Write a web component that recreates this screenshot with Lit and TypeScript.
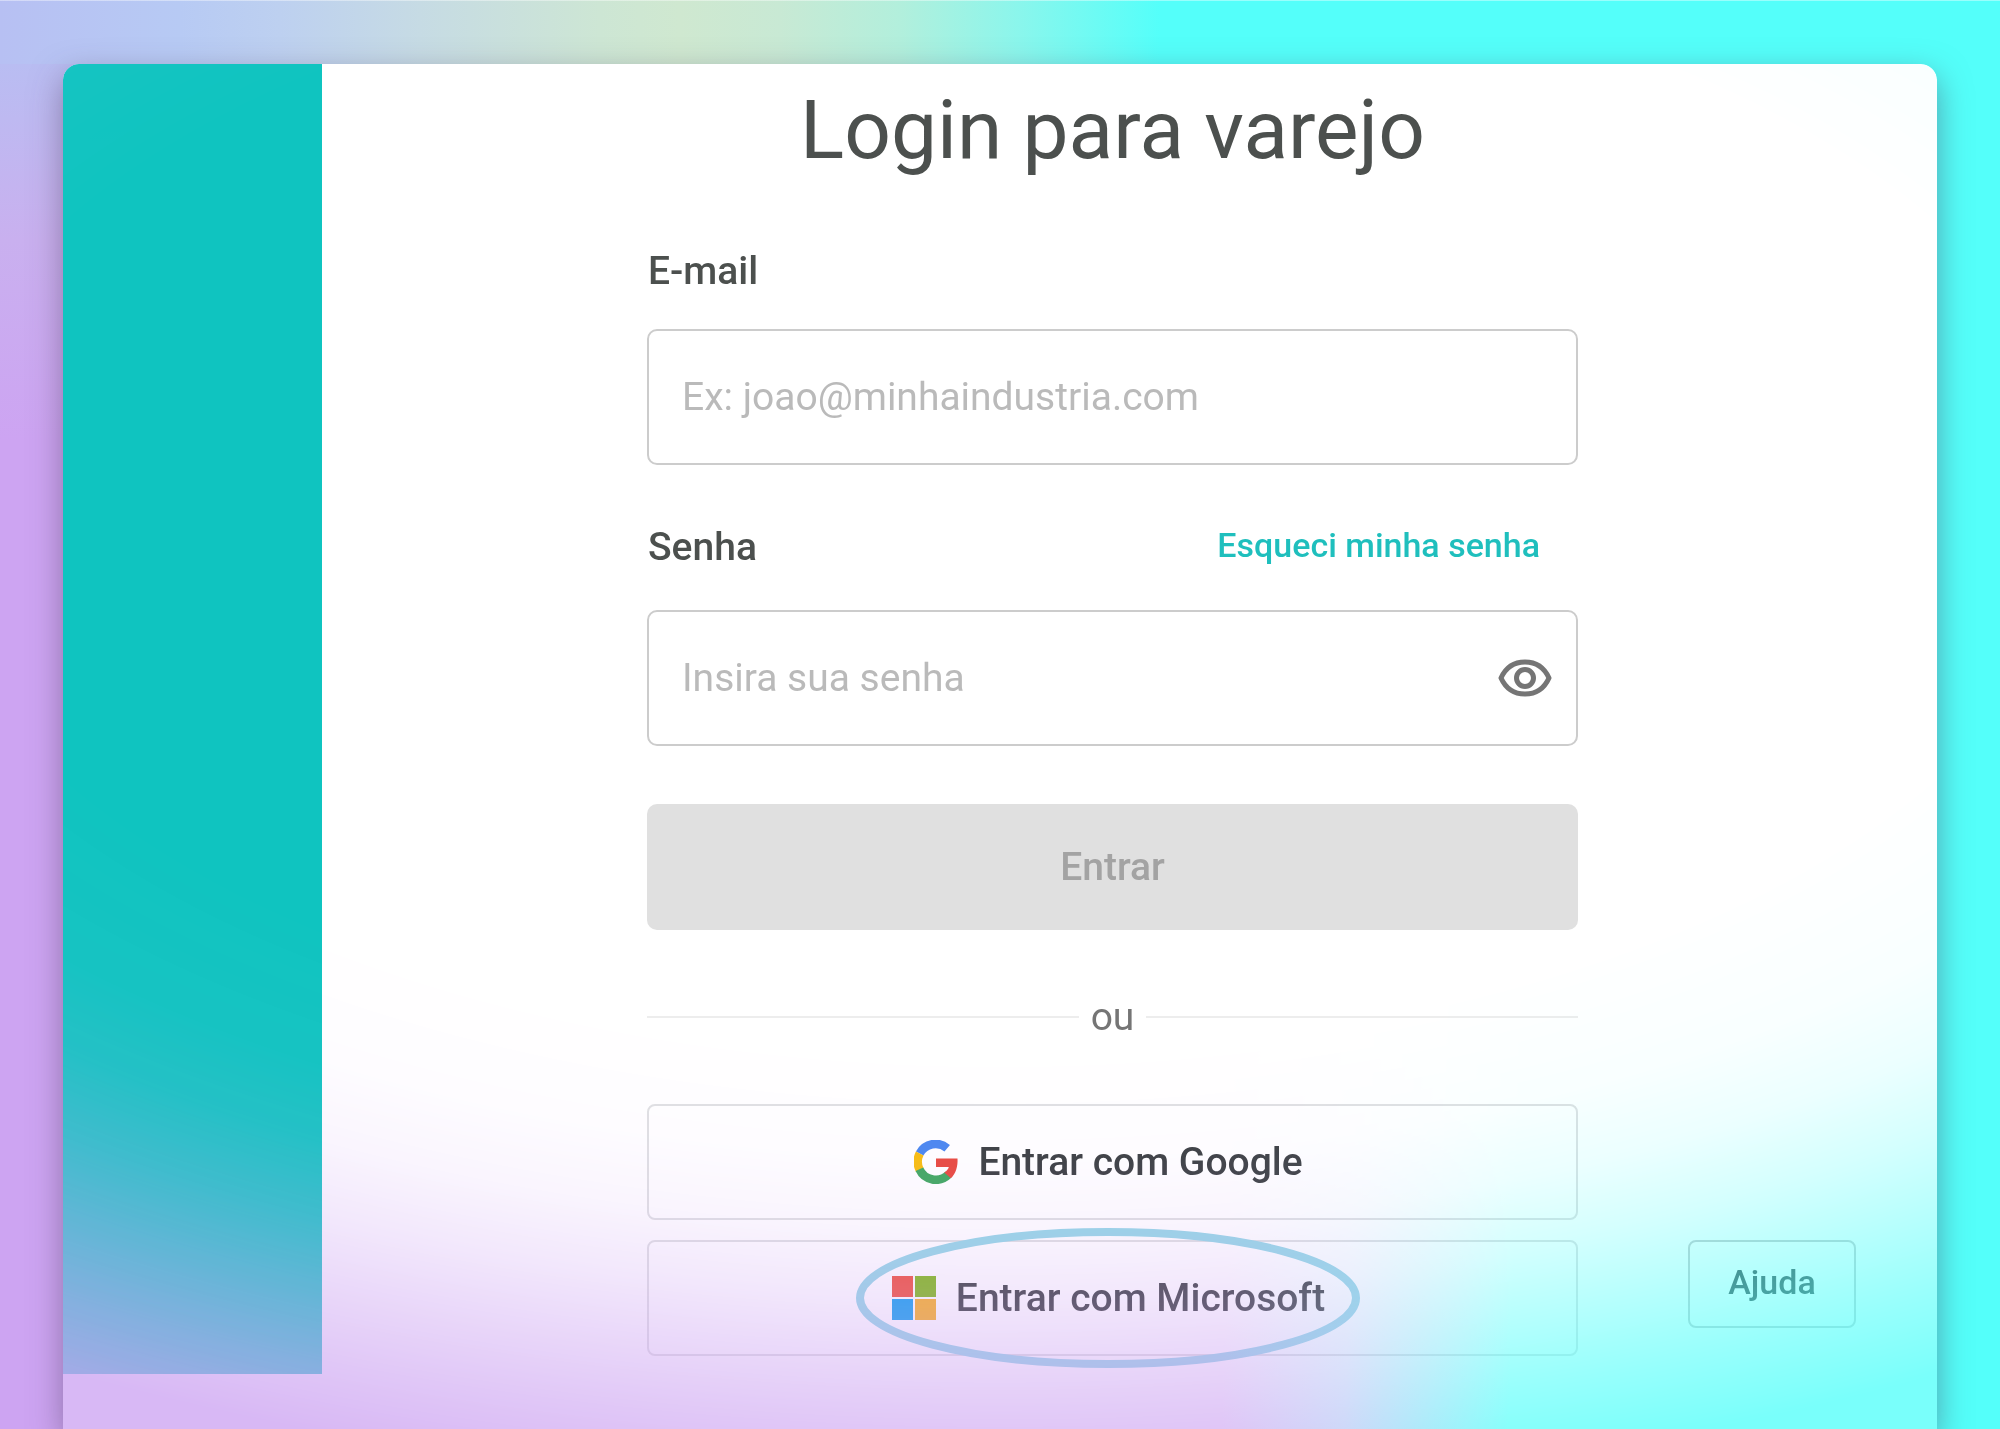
import { LitElement, html, css } from "lit";
import { customElement } from "lit/decorators.js";

@customElement("app-root")
export class AppRoot extends LitElement {
  static styles = css`
    :host {
      display: block;
      font-family: Roboto, "Liberation Sans", sans-serif;
      color: #4c504e;
    }
    * {
      box-sizing: border-box;
    }
    .page {
      display: flex;
      min-height: 100vh;
      padding: 64px 63px 0;
      background:
        linear-gradient(#ffffff66, #ffffff66) top / 100% 1px no-repeat,
        linear-gradient(90deg, #b7c0f3 0%, #b7caf4 9%, #bdd0f0 14%, #c6dbe4 21%, #cde6d4 30%, #cfe8d0 34%, #c8e9d4 39%, #b2efdc 45%, #8af6ec 51%, #54fffa 58%) top / 100% 64px no-repeat,
        linear-gradient(#b7c0f3 0, #b9bdf2 64px, #c9b0ef 240px, #cda4f2 440px, #cda4f200 500px) left top / 50% 100% no-repeat,
        linear-gradient(92deg, #cda4f2 0%, #cda4f2 62%, #b4c4f6 68%, #54fffa 76%);
    }
    .card {
      display: flex;
      flex: 1;
      border-radius: 16px 16px 0 0;
      box-shadow: 0 12px 32px #50406080;
    }
    .surface {
      display: grid;
      grid-template-columns: 259px 1fr;
      flex: 1;
      overflow: hidden;
      border-radius: 16px 16px 0 0;
      background: #fff;
      mask-image: radial-gradient(
        ellipse 104% 73% at 50% 32%,
        #000 55%,
        #000000f6 66%,
        #000000e2 73%,
        #000000bc 80%,
        #00000064 93%,
        #00000038 100%
      );
    }
    .brand {
      height: 1310px;
      background: #0fc4c0;
    }
    .content {
      display: grid;
      grid-template-columns: 325px 1fr 359px;
      align-items: start;
    }
    form {
      grid-column: 2;
      display: flex;
      flex-direction: column;
    }
    h1 {
      margin: 18px 0 71px;
      text-align: center;
      font-size: 82px;
      line-height: 96px;
      font-weight: 400;
    }
    label,
    .submit,
    .provider {
      font-size: 39px;
      line-height: 44px;
      font-weight: 500;
    }
    .email-label {
      padding-left: 1px;
    }
    .row {
      display: flex;
      justify-content: space-between;
      align-items: flex-start;
      margin-top: 60px;
      padding: 0 38px 0 1px;
    }
    a {
      color: #1fbfbd;
      font-size: 34px;
      line-height: 40px;
      font-weight: 500;
      text-decoration: none;
    }
    .field {
      display: flex;
      align-items: center;
      height: 136px;
      margin-top: 36px;
      padding: 0 23px 0 33px;
      border: 2px solid #ccc;
      border-radius: 10px;
      background: #fff;
    }
    .row + .field {
      margin-top: 41px;
    }
    input {
      flex: 1;
      min-width: 0;
      padding: 0;
      border: 0;
      outline: 0;
      background: none;
      font: 400 39px/44px Roboto, "Liberation Sans", sans-serif;
      color: #4c504e;
    }
    input::placeholder {
      color: #bababa;
      opacity: 1;
    }
    button {
      font-family: inherit;
      cursor: pointer;
    }
    .eye {
      display: flex;
      padding: 0;
      border: 0;
      background: none;
    }
    .submit {
      height: 126px;
      margin-top: 58px;
      border: 0;
      border-radius: 10px;
      background: #e0e0e0;
      color: #a3a3a3;
    }
    .or {
      display: flex;
      align-items: center;
      gap: 12px;
      margin: 65px 0;
      font-size: 39px;
      line-height: 44px;
      color: #757575;
    }
    .or::before,
    .or::after {
      content: "";
      flex: 1;
      height: 2px;
      background: #ededed;
    }
    .provider {
      position: relative;
      display: flex;
      align-items: center;
      justify-content: center;
      gap: 20px;
      height: 116px;
      padding: 0 8px 0 0;
      border: 2px solid #dfe0e2;
      border-radius: 8px;
      background: none;
      color: #3c4043;
    }
    .provider + .provider {
      margin-top: 20px;
    }
    .ring {
      position: absolute;
      left: 50%;
      top: 50%;
      transform: translate(-50%, -50%);
      margin-left: -5px;
      pointer-events: none;
    }
    .help {
      grid-column: 3;
      align-self: start;
      justify-self: start;
      width: 168px;
      height: 88px;
      margin: 1176px 0 0 110px;
      padding: 0 0 4px;
      border: 2px solid #c8cacc;
      border-radius: 8px;
      background: none;
      color: #3c4a4e;
      font-size: 34px;
      line-height: 44px;
      font-weight: 500;
    }
  `;

  render() {
    return html`
      <main class="page">
        <div class="card">
          <div class="surface">
            <aside class="brand"></aside>
            <section class="content">
              <form @submit=${(e: Event) => e.preventDefault()}>
                <h1>Login para varejo</h1>
                <label class="email-label" for="email">E-mail</label>
                <div class="field">
                  <input id="email" type="email" placeholder="Ex: joao@minhaindustria.com" />
                </div>
                <div class="row">
                  <label for="password">Senha</label>
                  <a href="#">Esqueci minha senha</a>
                </div>
                <div class="field">
                  <input id="password" type="password" placeholder="Insira sua senha" />
                  <button class="eye" type="button" aria-label="Mostrar senha">
                    <svg width="56" height="56" viewBox="0 0 56 56" fill="none" stroke="#757575" stroke-width="5">
                      <path d="M4 28C9 17 17.500 12 28 12S47 17 52 28C47 39 38.500 44 28 44S9 39 4 28Z" stroke-linejoin="round" />
                      <circle cx="28" cy="28" r="8.500" />
                    </svg>
                  </button>
                </div>
                <button class="submit" type="submit" disabled>Entrar</button>
                <div class="or">ou</div>
                <button class="provider" type="button">
                  <svg width="44" height="44" viewBox="0 0 44 44" fill="none" stroke-width="8.500">
                    <path d="M5.700 13.500A18 18 0 0 1 33.200 8.200" stroke="#4a87f0" />
                    <path d="M5.700 29.800A18 18 0 0 1 5.700 13.500" stroke="#f8bd10" />
                    <path d="M34.500 34.500A18 18 0 0 1 5.400 29.300" stroke="#41a861" />
                    <path d="M22 18.500H43.500C44 26 42 33.500 36.800 38.300L30.300 32.500C33 30.800 34.300 29 34.800 27H22Z" fill="#e8493f" />
                  </svg>
                  Entrar com Google
                </button>
                <button class="provider" type="button">
                  <svg width="44" height="44" viewBox="0 0 44 44">
                    <path d="M0 0H21V21H0Z" fill="#f0503c" />
                    <path d="M23 0H44V21H23Z" fill="#80b818" />
                    <path d="M0 23H21V44H0Z" fill="#12a0ee" />
                    <path d="M23 23H44V44H23Z" fill="#f8b022" />
                  </svg>
                  Entrar com Microsoft
                  <svg class="ring" width="506" height="142" viewBox="0 0 506 142" fill="none">
                    <ellipse cx="253" cy="71" rx="248" ry="66" stroke="#96d6e6" stroke-width="8" />
                  </svg>
                </button>
              </form>
              <button class="help" type="button">Ajuda</button>
            </section>
          </div>
        </div>
      </main>
    `;
  }
}
